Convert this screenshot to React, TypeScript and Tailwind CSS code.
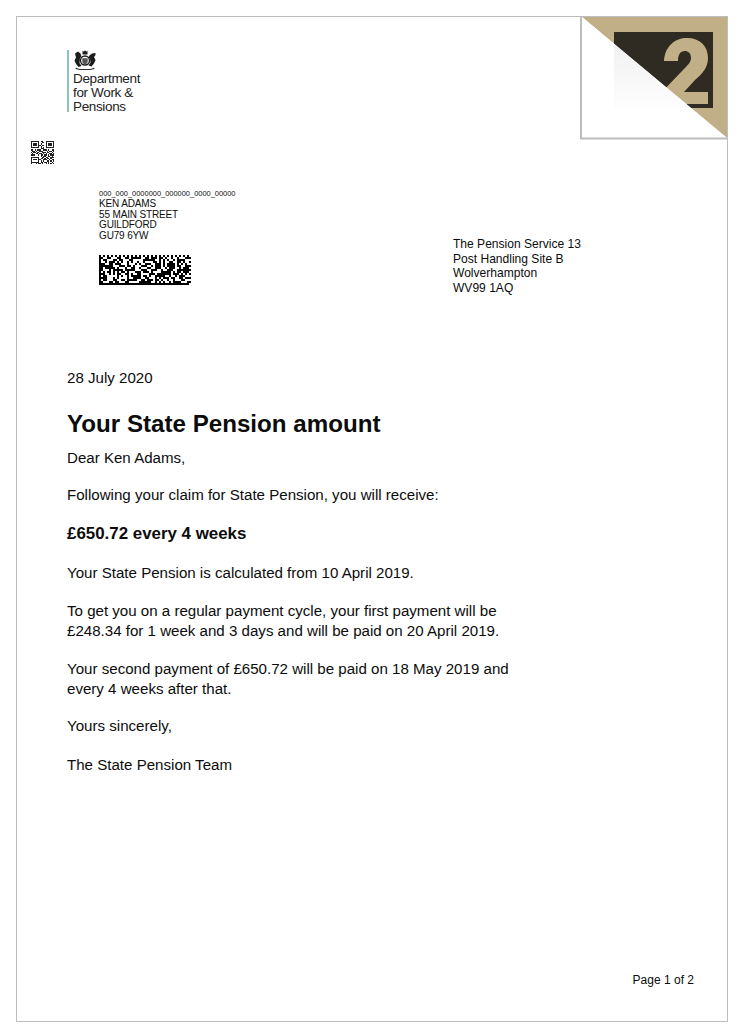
const qrRows = [
  '1111111011001111111',
  '1000001001101000001',
  '1011101010001011101',
  '1011101101101011101',
  '1000001010001000001',
  '1111111010101111111',
  '0000000011100000000',
  '1101011100111010011',
  '0110100111000101101',
  '1011011001110110010',
  '0100110110101001101',
  '1110001011011010111',
  '0000000010110011010',
  '1111111001101100111',
  '1000001011010110100',
  '1011101100111001011',
  '1000001010100110101',
  '1111111011011010010',
  '1000101101001010101',
];

// Pseudo-random module pattern for the 2D mailing barcode
function barcodeCells(cols: number, rows: number) {
  const cells: { x: number; y: number }[] = [];
  let seed = 73;
  for (let y = 0; y < rows; y++) {
    for (let x = 0; x < cols; x++) {
      seed = (seed * 137 + 59) % 1009;
      let on = seed % 100 < 54;
      if (y === 0) on = x % 2 === 0; // clock track
      if (x === 0 || y === rows - 1) on = true; // finder edges
      if (x === cols - 1) on = y % 2 === 1;
      if (on) cells.push({ x, y });
    }
  }
  return cells;
}

function Crest() {
  return (
    <svg width="22" height="20" viewBox="0 0 22 20" className="block">
      {/* crown */}
      <path d="M8.500 0.500l1.200 1.200 1.300-1.400 1.300 1.400 1.200-1.200v4h-5z" fill="#1c1c1c" />
      {/* lion */}
      <path d="M1 3.500l3-2 2.500 2 1 3-1.500 1.500-.5 5 2 3-3 1-2.500-3-1.500-3.500 1.500-3z" fill="#1c1c1c" />
      {/* unicorn */}
      <path d="M21.500 3l-3.500.5-2.500 2-1 2 1.500 1 .5 4-2 3 3 1 2.500-3 1.500-3.500-1.500-3 1.500-2z" fill="#1c1c1c" />
      {/* shield and garter */}
      <circle cx="11" cy="10.500" r="5.200" fill="#1c1c1c" />
      <circle cx="11" cy="10.500" r="3.800" fill="#fff" />
      <path d="M8.300 8.300h5.400v3.200c0 1.500-1.500 2.500-2.700 3-1.200-.5-2.700-1.500-2.700-3z" fill="#555" />
      {/* motto */}
      <path d="M2 17.500c3 2 5 1.500 9 1.500s6 .5 9-1.500l.5 1.500c-3 1-5 1-9.500 1s-6.500 0-9.500-1z" fill="#333" />
    </svg>
  );
}

function Logo() {
  return (
    <div className="flex h-[62px] border-l-2 border-[#8cc4c2] pl-1">
      <div>
        <div className="pl-px">
          <Crest />
        </div>
        <div className="mt-[2px] text-[13.500px] leading-[14px] tracking-[-0.35px] text-[#222]">
          Department<br />for Work &amp;<br />Pensions
        </div>
      </div>
    </div>
  );
}

function QrCode() {
  return (
    <svg width="23" height="23" viewBox="0 0 19 19" shapeRendering="crispEdges" className="block">
      {qrRows.map((row, y) =>
        row.split('').map((c, x) => (c === '1' ? <rect key={`${x}-${y}`} x={x} y={y} width="1" height="1" fill="#222" /> : null))
      )}
    </svg>
  );
}

function MailBarcode() {
  return (
    <svg width="92" height="30" viewBox="0 0 46 15" shapeRendering="crispEdges" className="block">
      {barcodeCells(46, 15).map(({ x, y }) => (
        <rect key={`${x}-${y}`} x={x} y={y} width="1" height="1" fill="#000" />
      ))}
    </svg>
  );
}

function CornerMark() {
  return (
    <svg width="147" height="123" viewBox="0 0 147 123" className="absolute right-0 top-0 block">
      <defs>
        <linearGradient id="fold" x1="0" y1="0" x2="0" y2="1">
          <stop offset="0" stopColor="#f1f1f1" />
          <stop offset="1" stopColor="#fdfdfd" />
        </linearGradient>
      </defs>
      <path d="M2 0H147V121z" fill="#c1b087" />
      <path d="M34 15H133V91H34z" fill="#2f2b22" />
      <path d="M84 44c1-15 11-23 23-23 13 0 21 8 21 20 0 10-6 16-13 22l-11 12h24v12H79v-9l24-25c5-5 8-8 8-12 0-5-3-7-6-7-5 0-7 4-7 10z" fill="#c1b087" />
      <path d="M2 0L147 121H2z" fill="#fff" />
      <path d="M34 26.700L111 91H34z" fill="url(#fold)" />
      <path d="M1 0V121.500H147" fill="none" stroke="#bdbdbd" strokeWidth="2" />
    </svg>
  );
}

export default function App() {
  return (
    <div className="h-[1032px] w-[746px] bg-white pl-4 pr-[18px] pt-4 font-['Liberation_Sans',Arial,sans-serif] text-[#0c0c0c]">
      <div className="relative flex h-[1006px] flex-col border border-[#bdbdbd]">
        <CornerMark />
        <div className="pl-[50px] pt-[33px]">
          <Logo />
        </div>
        <div className="pl-[14px] pt-[29px]">
          <QrCode />
        </div>

        <div className="flex pl-[82px] pt-[25px]">
          <div className="w-[354px]">
            <div className="text-[7.450px] leading-[10px]">000_000_0000000_000000_0000_00000</div>
            <div className="text-[10px] leading-[10.500px] tracking-[-0.15px]">
              KEN ADAMS<br />55 MAIN STREET<br />GUILDFORD<br />GU79 6YW
            </div>
            <div className="pt-[14px]">
              <MailBarcode />
            </div>
          </div>
          <div className="pt-[48px] text-[12.050px] leading-[14.500px]">
            The Pension Service 13<br />Post Handling Site B<br />Wolverhampton<br />WV99 1AQ
          </div>
        </div>

        <div className="pl-[50px] pt-[73px] text-[15.100px] leading-[19.500px]">
          <p>28 July 2020</p>
          <h1 className="mt-[21px] text-[24.150px] font-bold leading-[30px]">Your State Pension amount</h1>
          <p className="mt-[9px]">Dear Ken Adams,</p>
          <p className="mt-[18px]">Following your claim for State Pension, you will receive:</p>
          <h2 className="mt-[19px] text-[16.900px] font-bold leading-[20px]">£650.72 every 4 weeks</h2>
          <p className="mt-[19px]">Your State Pension is calculated from 10 April 2019.</p>
          <p className="mt-[19px]">
            To get you on a regular payment cycle, your first payment will be<br />
            £248.34 for 1 week and 3 days and will be paid on 20 April 2019.
          </p>
          <p className="mt-[19px]">
            Your second payment of £650.72 will be paid on 18 May 2019 and<br />
            every 4 weeks after that.
          </p>
          <p className="mt-[18px]">Yours sincerely,</p>
          <p className="mt-[19px]">The State Pension Team</p>
        </div>

        <div className="mt-auto flex justify-end pb-[34px] pr-[33px] text-[12px] leading-[14px]">Page 1 of 2</div>
      </div>
    </div>
  );
}
